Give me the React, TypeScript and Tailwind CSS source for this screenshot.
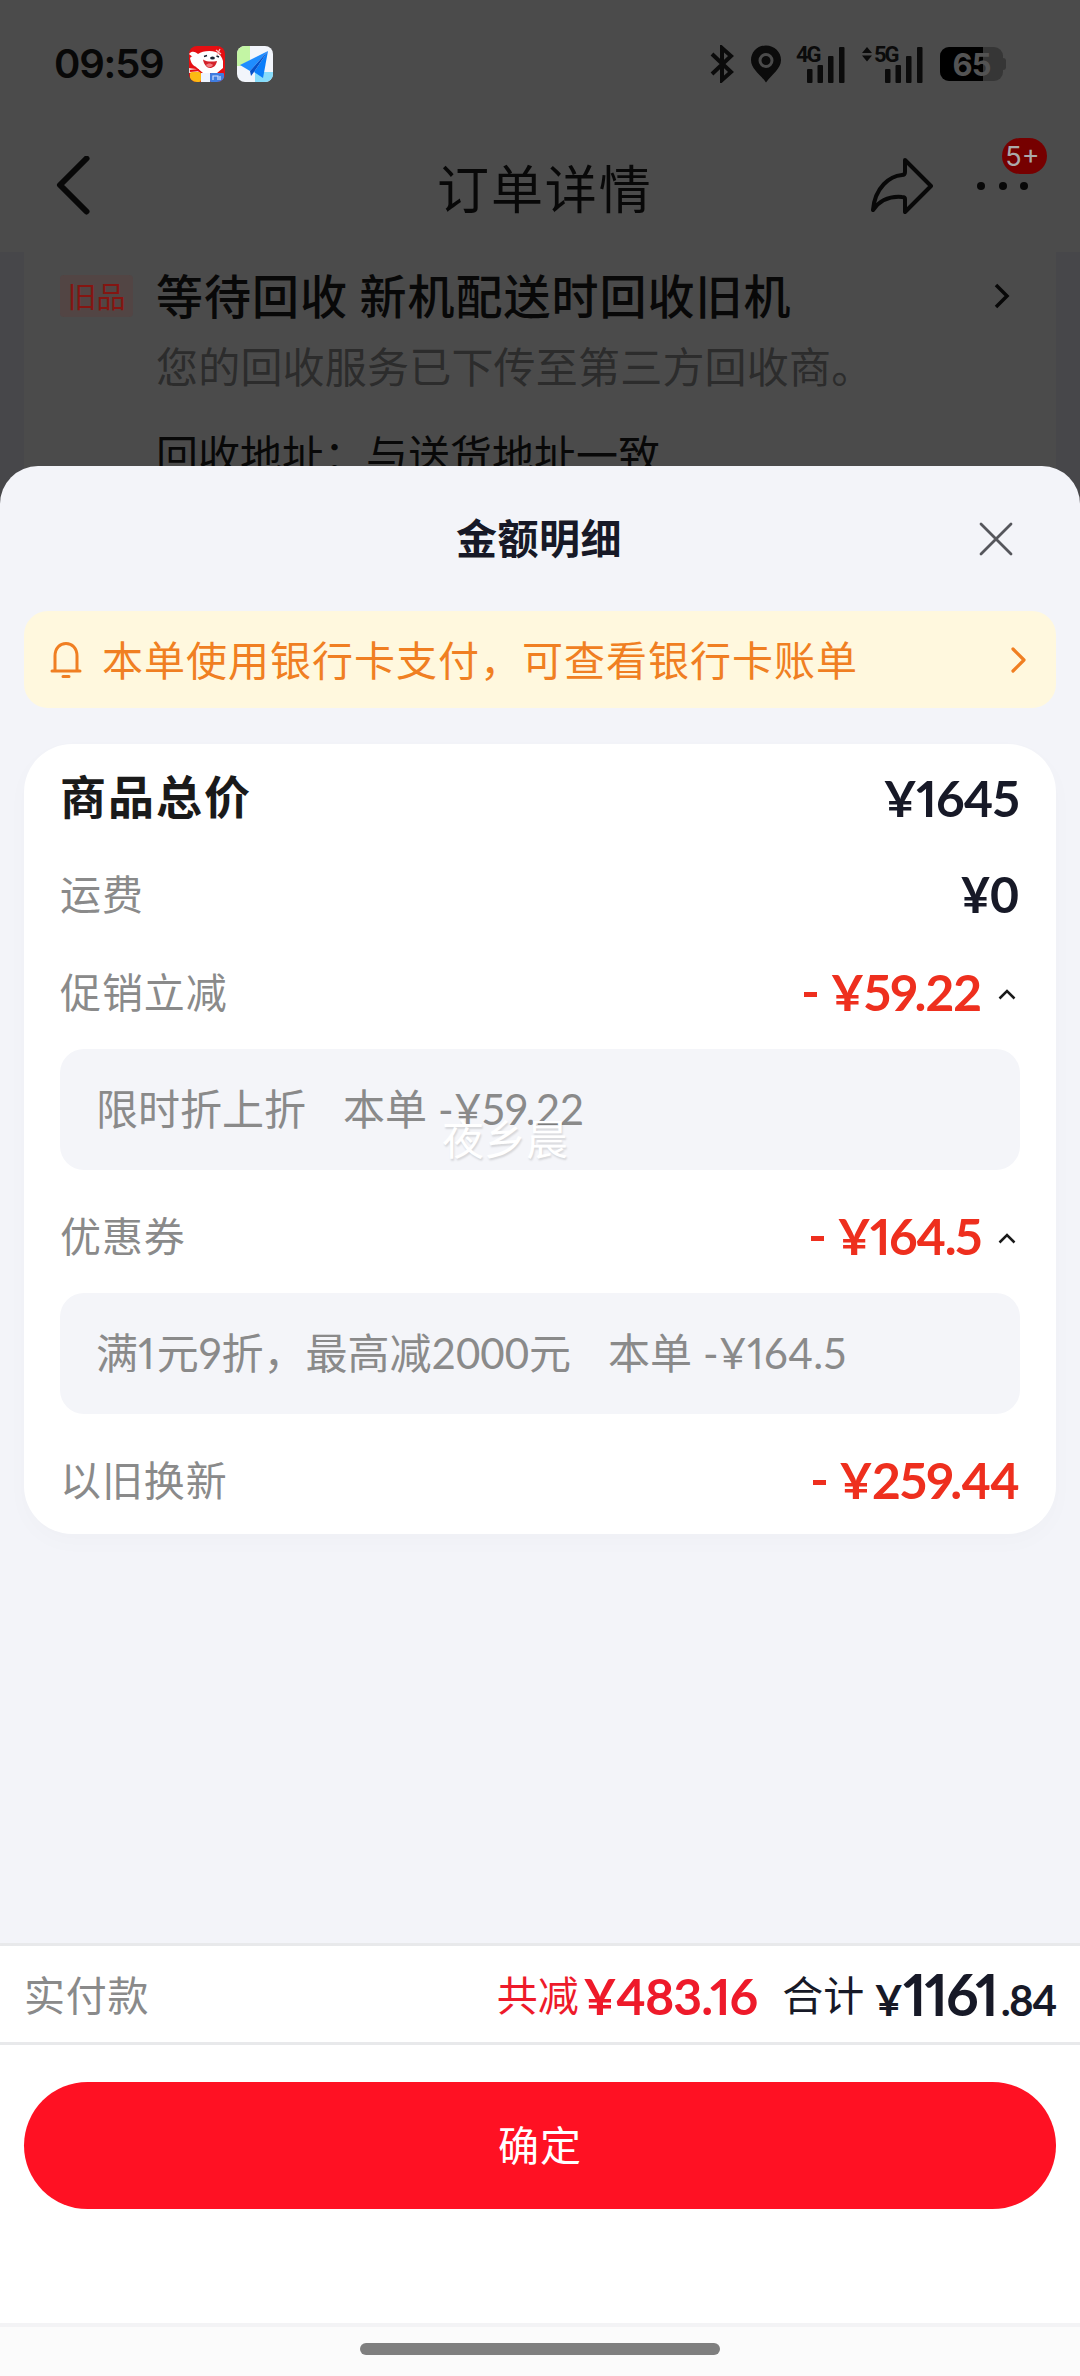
import React from "react";

const CJK = "font-['Noto_Sans_CJK_SC',sans-serif]";
const NUM = "font-['Lato','Noto_Sans_CJK_SC',sans-serif] proportional-nums";

function DogIcon() {
  return (
    <svg viewBox="0 0 36 36" className="size-9">
      <defs>
        <clipPath id="dog">
          <rect width="36" height="36" rx="8" />
        </clipPath>
      </defs>
      <g clipPath="url(#dog)">
        <rect width="36" height="36" fill="#e60f12" />
        <path d="M0 8C3 4 7 6 9 8c4-3 12-4 18-2 4 2 6 5 7 9v7l-6 5H14L7 21 5 12z" fill="#fff" />
        <path d="M1 12c2-3 5-2 6 1l2 8c-4 0-7-3-8-9z" fill="#fff" />
        <path d="M0 22l7 1 4 4H0z" fill="#f4d9d6" />
        <path d="M1 25l9-1" stroke="#e60f12" strokeWidth="2" />
        <path d="M27 4l5 4M31 3l-3 6" stroke="#ffc2c2" strokeWidth="1.300" />
        <ellipse cx="23.500" cy="12" rx="2.400" ry="1.500" fill="#1c2433" />
        <path d="M15 10.500l3-1M27.500 10l2.500 1" stroke="#1c2433" strokeWidth="1.500" />
        <path d="M14 13.500c4 2.500 9 2.500 14 1.500-1 5-4 7-7 7s-6-3-7-8.500z" fill="#d3222a" />
        <path d="M17 19c2-2 5-2 7 0-2 3-5 3-7 0z" fill="#f27d80" />
        <rect x="12" y="27" width="9" height="9" fill="#eef4ff" />
        <rect x="1" y="26" width="11" height="10" rx="2" fill="#fcb913" />
        <rect x="21" y="27" width="14" height="9" rx="1" fill="#3f7de0" />
        <path d="M24 34v-4h5v4M31 30v4" stroke="#cfe2ff" strokeWidth="1.200" fill="none" />
      </g>
    </svg>
  );
}

function MapIcon() {
  return (
    <svg viewBox="0 0 36 36" className="size-9">
      <defs>
        <clipPath id="map">
          <rect width="36" height="36" rx="8" />
        </clipPath>
      </defs>
      <g clipPath="url(#map)">
        <rect width="36" height="36" fill="#f2f5fb" />
        <path d="M0 0h13v14L4 20H0z" fill="#c3f5a4" />
        <path d="M18 26h18v10H18z" fill="#86dcfb" />
        <path d="M31 5L3 19l10 6z" fill="#1f8dff" />
        <path d="M31 5L17 26l9 6z" fill="#0a7dfa" />
        <path d="M31 5L13 25l1 5 3-4z" fill="#0550c8" />
      </g>
    </svg>
  );
}

function Signal({ label, arrows }: { label: string; arrows?: boolean }) {
  return (
    <div className="relative h-[38px] w-[62px]">
      <svg viewBox="0 0 62 38" className="h-[38px] w-[62px]" fill="#0b0b0b">
        {arrows && <path d="M0 8l5-6 5 6zM0 10.500l5 6 5-6z" />}
        <rect x="23" y="24" width="5.500" height="14" rx="1" />
        <rect x="33.500" y="20" width="5.500" height="18" rx="1" />
        <rect x="44" y="11" width="5.500" height="27" rx="1" />
        <rect x="55" y="2" width="5.500" height="36" rx="1" />
      </svg>
      <span className="absolute left-3 -top-[3px] font-['Roboto'] text-[22px] font-bold leading-[26px] tracking-[-2px] text-[#0b0b0b]">{label}</span>
    </div>
  );
}

function StatusBar() {
  return (
    <div className="flex h-[124px] items-center pt-1 pl-[54px] pr-[74px]">
      <span className="w-[135px] font-['Inter'] text-[40px] font-semibold leading-none tracking-[-1.200px] text-[#080808]">09:59</span>
      <DogIcon />
      <span className="w-3" />
      <MapIcon />
      <div className="ml-auto flex items-center">
        <svg viewBox="0 0 24 38" className="mr-[17px] h-[38px] w-6" fill="none" stroke="#0b0b0b" strokeWidth="4">
          <path d="M2 9l19 18-9 8V3l9 8L2 29" />
        </svg>
        <svg viewBox="0 0 30 38" className="mr-[16px] h-[38px] w-[30px]">
          <path d="M15 .500C6.500.500 0 7 0 15c0 9 9 14 15 22.500C21 29 30 24 30 15 30 7 23.500.500 15 .500z" fill="#0b0b0b" />
          <circle cx="15" cy="15.500" r="6" fill="none" stroke="#4b4b4b" strokeWidth="3" />
        </svg>
        <span className="-ml-[13px] mr-4 flex"><Signal label="4G" /></span>
        <span className="mr-[16px] flex"><Signal label="5G" arrows /></span>
        <div className="relative flex h-[34px] w-[63px] items-center justify-center overflow-hidden rounded-[9px] bg-[#363636]">
          <div className="absolute inset-y-0 left-0 w-[43px] bg-black" />
          <span className="relative font-['Inter'] text-[31px] font-bold leading-none tracking-[-1px] text-[#535353]">65</span>
        </div>
        <div className="h-3 w-[3px] rounded-r bg-[#363636]" />
      </div>
    </div>
  );
}

function NavBar() {
  return (
    <div className="flex h-32 items-center justify-between pb-1 pl-14 pr-[33px]">
      <svg viewBox="0 0 34 60" className="mr-[347px] h-[60px] w-[34px]" fill="none" stroke="#080808" strokeWidth="6" strokeLinecap="round" strokeLinejoin="round">
        <path d="M30.500 2.500L4 29l26.500 26.500" />
      </svg>
      <h1 className="grow pt-[2px] text-[52px] leading-none tracking-[1.900px] text-[#080808]">订单详情</h1>
      <svg viewBox="0 0 62 58" className="mr-11 h-[58px] w-[62px]" fill="none" stroke="#080808" strokeWidth="4" strokeLinejoin="round">
        <path d="M34 3l26 26-26 26V42c0-1-1-2-3-2-12-1-22 3-29 13C4 30 19 19 31 18c2 0 3-1 3-3z" />
      </svg>
      <div className="relative flex w-[70px] gap-[13.500px]">
        <i className="size-2 rounded-full bg-[#080808]" />
        <i className="size-2 rounded-full bg-[#080808]" />
        <i className="size-2 rounded-full bg-[#080808]" />
        <span className="absolute -top-[44px] left-[25px] flex h-9 w-[45px] items-center justify-center rounded-full bg-[#760000] pr-1 font-['Inter'] text-[27px] leading-none text-[#aaa]">5+</span>
      </div>
    </div>
  );
}

function RecycleCard() {
  return (
    <div className="h-[300px] bg-[#47474a] px-6">
      <div className="flex h-full items-start bg-[#4b4b4b] pl-9 pr-[46px] pt-[17px]">
        <span className="mt-[6px] flex h-[42px] w-[73px] items-center justify-center rounded bg-[#524544] pb-0.5 text-[29px] leading-none text-[#851511]">旧品</span>
        <div className="ml-[23px] grow whitespace-nowrap">
          <h2 className="-mt-[3px] text-[47px] font-medium leading-[56px] tracking-[1px] text-[#080808]">等待回收 新机配送时回收旧机</h2>
          <p className="mt-[15px] text-[42px] leading-[56px] tracking-[0.200px] text-[#2c2c2c]">您的回收服务已下传至第三方回收商。</p>
          <p className="mt-[32px] text-[42px] leading-[56px] text-[#080808]">回收地址：与送货地址一致</p>
        </div>
        <svg viewBox="0 0 16 26" className="mt-[14px] h-[26px] w-4" fill="none" stroke="#080808" strokeWidth="3.500">
          <path d="M2 2l11 11L2 24" />
        </svg>
      </div>
    </div>
  );
}

function Caret() {
  return (
    <svg viewBox="0 0 18 11" className="ml-[17px] mr-[3px] mt-1 h-[11px] w-[18px]" fill="none" stroke="#1a1a1a" strokeWidth="2.500">
      <path d="M1.500 9.500L9 2l7.500 7.500" />
    </svg>
  );
}

function Row({ label, amount, minus, caret, strong, tracking }: { label: string; amount: string; minus?: boolean; caret?: boolean; strong?: boolean; tracking: string }) {
  return (
    <div className="flex h-[98px] items-center justify-between pl-9 pr-[37px]">
      <span className={strong ? "mb-1 text-[46px] font-bold tracking-[2px] text-[#1a1a1a]" : "mb-[2px] text-[41px] tracking-[0.900px] text-[#8a8a8a]"}>{label}</span>
      <span className={`flex items-center ${NUM} text-[50px] font-bold leading-none ${minus ? "text-[#ee2f1e]" : "text-[#171927]"}`}>
        {minus && <span className="mr-[13px] mt-1 h-[5px] w-[13px] bg-[#ee2f1e]" />}
        <span className={tracking}>{amount}</span>
        {caret && <Caret />}
      </span>
    </div>
  );
}

function Detail({ name, value }: { name: React.ReactNode; value: string }) {
  return (
    <div className={`mx-9 mb-[17px] mt-2 flex h-[121px] items-center whitespace-pre rounded-3xl bg-[#f4f5f9] pl-9 ${NUM} text-[42px] text-[#8a8a8a]`}>
      <span>{name}</span>
      <span className="ml-[37px]">本单</span>
      <span className="ml-[11px] tracking-[0.300px]">{value}</span>
    </div>
  );
}

export default function App() {
  return (
    <div className={`relative flex h-[2376px] w-[1080px] flex-col overflow-hidden bg-[#4b4b4b] ${CJK}`}>
      <StatusBar />
      <NavBar />
      <RecycleCard />
      <section className="-mt-[86px] flex grow flex-col rounded-t-[38px] bg-[#f3f4f9]">
        <header className="flex h-[145px] items-center justify-end pr-[67px]">
          <h2 className="mb-1 mr-[357px] text-[41px] font-bold leading-none tracking-[0.500px] text-[#171927]">金额明细</h2>
          <svg viewBox="0 0 34 34" className="h-[34px] w-[34px]" fill="none" stroke="#55565c" strokeWidth="2.800" strokeLinecap="round">
            <path d="M2 2l30 30M32 2L2 32" />
          </svg>
        </header>
        <div className="mx-6 flex h-[97px] items-center rounded-3xl bg-[#fff8de] pl-[26px] pr-[29px] text-[#f07f22]">
          <svg viewBox="0 0 32 38" className="h-[38px] w-8" fill="none" stroke="currentColor" strokeWidth="3" strokeLinecap="round">
            <path d="M2 30h28M5 30V15C5 7 10 2.500 16 2.500S27 7 27 15v15M13 35.500h6" />
          </svg>
          <span className="mb-[3px] ml-[20px] whitespace-nowrap text-[41px] leading-none tracking-[1px]">本单使用银行卡支付，可查看银行卡账单</span>
          <svg viewBox="0 0 16 26" className="ml-auto h-[26px] w-4" fill="none" stroke="currentColor" strokeWidth="3.200" strokeLinecap="round" strokeLinejoin="round">
            <path d="M2 2l11 11L2 24" />
          </svg>
        </div>
        <div className="relative mx-6 mt-9 h-[790px] rounded-[48px] bg-white pt-[3px] shadow-[0_8px_24px_rgba(0,0,0,0.02)]">
          <Row label="商品总价" amount="¥1645" strong tracking="mt-1 tracking-[-1px]" />
          <Row label="运费" amount="¥0" tracking="tabular-nums" />
          <Row label="促销立减" amount="¥59.22" minus caret tracking="tracking-[-0.900px]" />
          <Detail name="限时折上折" value="-¥59.22" />
          <Row label="优惠券" amount="¥164.5" minus caret tracking="tracking-[-1.500px]" />
          <Detail
            name={
              <>
                满<span className="tracking-[2px]">1</span>元9折，最高减<span className="tabular-nums">2000</span>元
              </>
            }
            value="-¥164.5"
          />
          <Row label="以旧换新" amount="¥259.44" minus tracking="tracking-[-1px]" />
          <span className="absolute left-[418px] top-[372px] text-[42px] leading-none text-white [text-shadow:1px_2px_2px_rgba(0,0,0,0.13)]">夜乡晨</span>
        </div>
        <footer className="mt-auto bg-white">
          <div className="flex h-[102px] items-center border-y-[3px] border-[#e8e9eb] pl-6 pr-6">
            <span className="mr-auto text-[41px] tracking-[0.700px] text-[#8a8a8a]">实付款</span>
            <span className="text-[41px] text-[#ee1a2a]">共减</span>
            <span className={`${NUM} ml-1 mt-1 text-[50px] font-bold leading-none tracking-[-1px] text-[#ee1a2a]`}>¥483.16</span>
            <span className="ml-[25px] text-[41px] text-[#171927]">合计</span>
            <span className={`ml-[10px] flex items-baseline ${NUM} font-bold leading-none text-[#171927]`}>
              <span className="text-[42px]">¥</span>
              <span className="text-[57px] tracking-[-2px]">1161</span>
              <span className="ml-1 text-[42px] tracking-[-1.500px]">.84</span>
            </span>
          </div>
          <div className="h-[278px] px-6 pt-[37px]">
            <button className="flex h-[127px] w-full items-center justify-center rounded-full bg-[#ff1123] pb-[3px] text-[41px] tracking-[1px] text-white">确定</button>
          </div>
          <div className="flex h-[53px] justify-center border-t-4 border-[#f3f3f5] bg-[#fbfbfb] pt-4">
            <div className="h-3 w-[360px] rounded-full bg-[#7f7f7f]" />
          </div>
        </footer>
      </section>
    </div>
  );
}
